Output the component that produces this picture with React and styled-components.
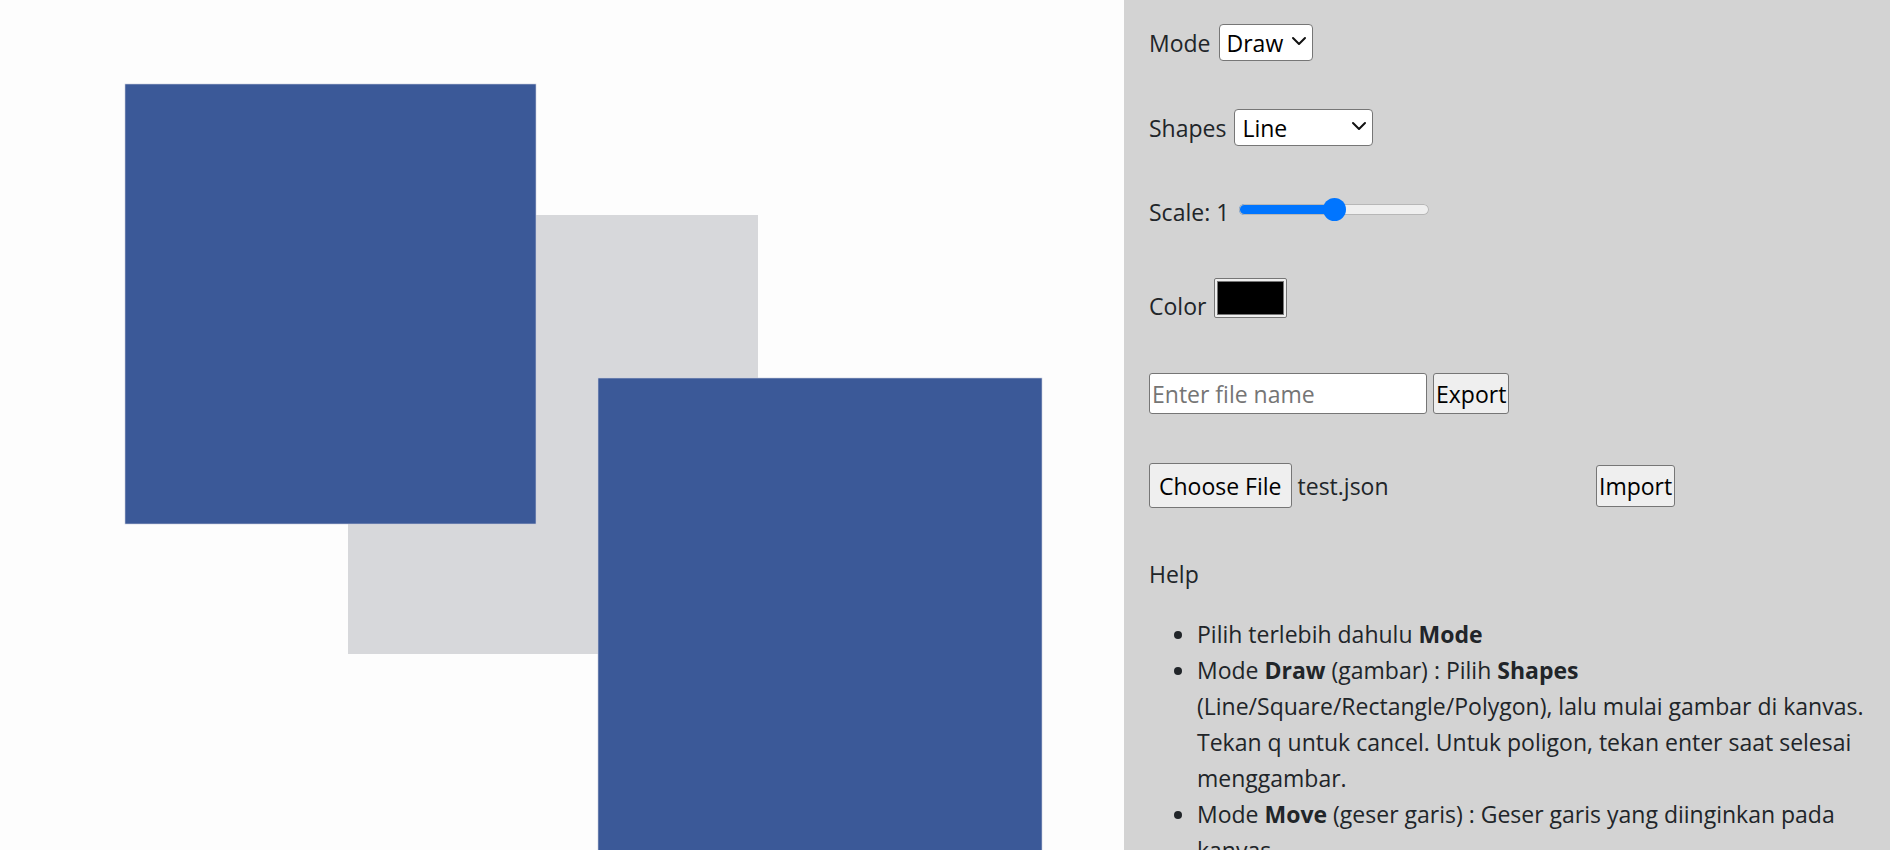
import React, { useState } from 'react';
import styled, { createGlobalStyle } from 'styled-components';
import { ChevronDown } from 'lucide-react';

const GlobalStyle = createGlobalStyle`
  html, body {
    margin: 0;
    padding: 0;
    overflow: hidden;
  }

  body {
    font-family: 'Segoe UI', 'Open Sans', 'Noto Sans', sans-serif;
    color: #212529;
  }
`;

// drawn in order: the grey square sits under both blue ones
const shapes = [
  { x: 348, y: 215, w: 410, h: 439, fill: '#d7d8db', stroke: 'none' },
  { x: 125, y: 84, w: 411, h: 440, fill: '#3b5998', stroke: '#c9cede' },
  { x: 598, y: 378, w: 444, h: 520, fill: '#3b5998', stroke: '#c9cede' },
];

const App = () => {
  const [mode, setMode] = useState('draw');
  const [shape, setShape] = useState('line');
  const [scale, setScale] = useState(1);

  return (
    <StyledLayout>
      <GlobalStyle />
      <StyledCanvas>
        <svg width="1124" height="850" viewBox="0 0 1124 850">
          <rect x="0" y="0" width="1124" height="850" fill="#fdfdfd" />
          {shapes.map((s, i) => (
            <rect key={i} x={s.x} y={s.y} width={s.w} height={s.h} fill={s.fill} stroke={s.stroke} strokeWidth="0.6" />
          ))}
        </svg>
      </StyledCanvas>

      <StyledPanel>
        <StyledRow $mb={48}>
          <span>Mode</span>
          <StyledSelectWrap $width={94}>
            <StyledSelect value={mode} onChange={(e) => setMode(e.target.value)}>
              <option value="draw">Draw</option>
              <option value="move">Move</option>
            </StyledSelect>
            <StyledChevron size={24} strokeWidth={2} />
          </StyledSelectWrap>
        </StyledRow>

        <StyledRow $mb={48}>
          <span>Shapes</span>
          <StyledSelectWrap $width={139}>
            <StyledSelect value={shape} onChange={(e) => setShape(e.target.value)}>
              <option value="line">Line</option>
              <option value="square">Square</option>
              <option value="rectangle">Rectangle</option>
              <option value="polygon">Polygon</option>
            </StyledSelect>
            <StyledChevron size={24} strokeWidth={2} />
          </StyledSelectWrap>
        </StyledRow>

        <StyledRow $mb={48} $align="flex-start">
          <span>Scale: {scale}</span>
          <StyledRange
            type="range"
            min="0"
            max="2"
            step="0.1"
            value={scale}
            onChange={(e) => setScale(Number(e.target.value))}
            style={{ '--fill': `${(scale / 2) * 100}%` }}
          />
        </StyledRow>

        <StyledRow $mb={49}>
          <span>Color</span>
          <StyledColorSwatch>
            <StyledColorInner />
          </StyledColorSwatch>
        </StyledRow>

        <StyledRow $mb={49} $align="center" $gap={6}>
          <StyledTextInput placeholder="Enter file name" />
          <StyledButton $pad="0 2px" $height={41}>Export</StyledButton>
        </StyledRow>

        <StyledRow $mb={48} $align="center" $gap={5}>
          <StyledFilePicker>
            <StyledButton as="span" $pad="0 9px" $height={45}>Choose File</StyledButton>
            <StyledFileName>test.json</StyledFileName>
          </StyledFilePicker>
          <StyledButton $pad="0 2px" $height={42}>Import</StyledButton>
        </StyledRow>

        <StyledHelpTitle>Help</StyledHelpTitle>
        <StyledList>
          <li>Pilih terlebih dahulu <b>Mode</b></li>
          <li>
            Mode <b>Draw</b> (gambar) : Pilih <b>Shapes</b> (Line/Square/Rectangle/Polygon), lalu mulai gambar di
            kanvas. Tekan q untuk cancel. Untuk poligon, tekan enter saat selesai menggambar.
          </li>
          <li>Mode <b>Move</b> (geser garis) : Geser garis yang diinginkan pada kanvas.</li>
        </StyledList>
      </StyledPanel>
    </StyledLayout>
  );
};

const StyledLayout = styled.div`
  display: flex;
  width: 1890px;
  height: 850px;
  overflow: hidden;
`;

const StyledCanvas = styled.div`
  width: 1124px;
  height: 850px;
  flex-shrink: 0;

  svg {
    display: block;
  }
`;

const StyledPanel = styled.div`
  flex: 1;
  background-color: #d3d3d3;
  padding: 24px 26px 0 25px;
  font-size: 23px;
  line-height: 36px;
  overflow: hidden;
`;

const StyledRow = styled.div`
  display: flex;
  align-items: ${({ $align }) => $align || 'baseline'};
  gap: ${({ $gap }) => ($gap === undefined ? 8 : $gap)}px;
  margin-bottom: ${({ $mb }) => $mb}px;
`;

const StyledSelectWrap = styled.span`
  position: relative;
  display: inline-flex;
  width: ${({ $width }) => $width}px;
`;

const StyledSelect = styled.select`
  appearance: none;
  width: 100%;
  height: 37px;
  padding: 0 24px 0 7px;
  font: inherit;
  font-size: 23px;
  color: #000;
  background: #fff;
  border: 1px solid #767676;
  border-radius: 4px;
`;

const StyledChevron = styled(ChevronDown)`
  position: absolute;
  right: 2px;
  top: 5px;
  color: #111;
  pointer-events: none;
`;

const StyledRange = styled.input`
  appearance: none;
  width: 190px;
  height: 23px;
  margin: 4px 0 0 2px;
  background: transparent;

  &::-webkit-slider-runnable-track {
    height: 11px;
    border-radius: 6px;
    background: linear-gradient(to right, #0075ff var(--fill), #efefef var(--fill));
    box-shadow: inset 0 0 0 1px #b7b7b7;
  }

  &::-webkit-slider-thumb {
    appearance: none;
    width: 23px;
    height: 23px;
    margin-top: -6px;
    border-radius: 50%;
    background: #0075ff;
  }
`;

const StyledColorSwatch = styled.span`
  display: inline-flex;
  width: 73px;
  height: 40px;
  box-sizing: border-box;
  padding: 2px;
  background: #efefef;
  border: 1px solid #767676;
  border-radius: 2px;
`;

const StyledColorInner = styled.span`
  flex: 1;
  background: #000;
  border: 1px solid #777;
`;

const StyledTextInput = styled.input`
  width: 278px;
  height: 41px;
  box-sizing: border-box;
  padding: 0 2px;
  font: inherit;
  font-size: 23px;
  color: #000;
  background: #fff;
  border: 1px solid #767676;
  border-radius: 3px;

  &::placeholder {
    color: #757575;
  }
`;

const StyledButton = styled.button`
  display: inline-flex;
  align-items: center;
  box-sizing: border-box;
  height: ${({ $height }) => $height}px;
  padding: ${({ $pad }) => $pad};
  font: inherit;
  font-size: 23px;
  color: #000;
  background: #efefef;
  border: 1px solid #767676;
  border-radius: 3px;
`;

const StyledFilePicker = styled.label`
  display: inline-flex;
  align-items: center;
  gap: 6px;
  width: 442px;
`;

const StyledFileName = styled.span`
  color: #212529;
`;

const StyledHelpTitle = styled.p`
  margin: 0 0 24px;
`;

const StyledList = styled.ul`
  margin: 0;
  padding-left: 48px;

  b {
    font-weight: 700;
  }
`;

export default App;
